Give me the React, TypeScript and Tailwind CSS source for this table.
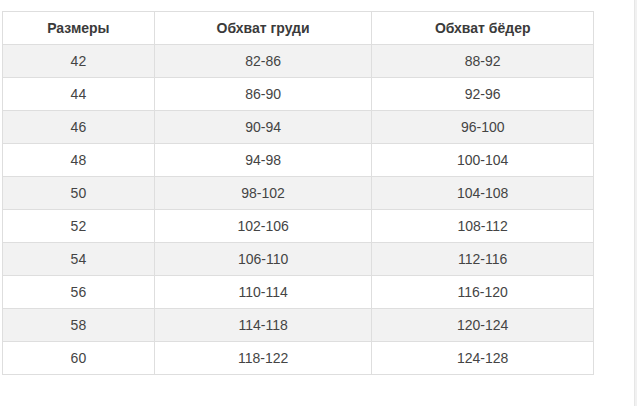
import React from "react";

const rows = [
  ["42", "82-86", "88-92"],
  ["44", "86-90", "92-96"],
  ["46", "90-94", "96-100"],
  ["48", "94-98", "100-104"],
  ["50", "98-102", "104-108"],
  ["52", "102-106", "108-112"],
  ["54", "106-110", "112-116"],
  ["56", "110-114", "116-120"],
  ["58", "114-118", "120-124"],
  ["60", "118-122", "124-128"],
];

export default function App() {
  return (
    <div className="flex h-[406px] w-[637px] bg-white" style={{ fontFamily: '"Liberation Sans", Arial, sans-serif' }}>
      <div className="flex-1 pt-[11px] pl-[2px]">
        <table className="border-collapse w-[592px] text-[14px] text-[#444]">
          <colgroup>
            <col className="w-[152px]" />
            <col className="w-[218px]" />
            <col className="w-[222px]" />
          </colgroup>
          <thead>
            <tr className="h-[33px] bg-white">
              <th className="border border-[#dedede] font-bold text-center p-0 text-[#3a3a3a]">Размеры</th>
              <th className="border border-[#dedede] font-bold text-center p-0 text-[#3a3a3a]">Обхват груди</th>
              <th className="border border-[#dedede] font-bold text-center p-0 text-[#3a3a3a]">Обхват бёдер</th>
            </tr>
          </thead>
          <tbody>
            {rows.map((r, i) => (
              <tr key={i} className={"h-[33px] " + (i % 2 === 0 ? "bg-[#f2f2f2]" : "bg-white")}>
                {r.map((c, j) => (
                  <td key={j} className="border border-[#dedede] text-center p-0">
                    {c}
                  </td>
                ))}
              </tr>
            ))}
          </tbody>
        </table>
      </div>
      <div className="w-[3px] h-full bg-[#f1f1f1] border-l border-[#e6e6e6]" />
    </div>
  );
}
